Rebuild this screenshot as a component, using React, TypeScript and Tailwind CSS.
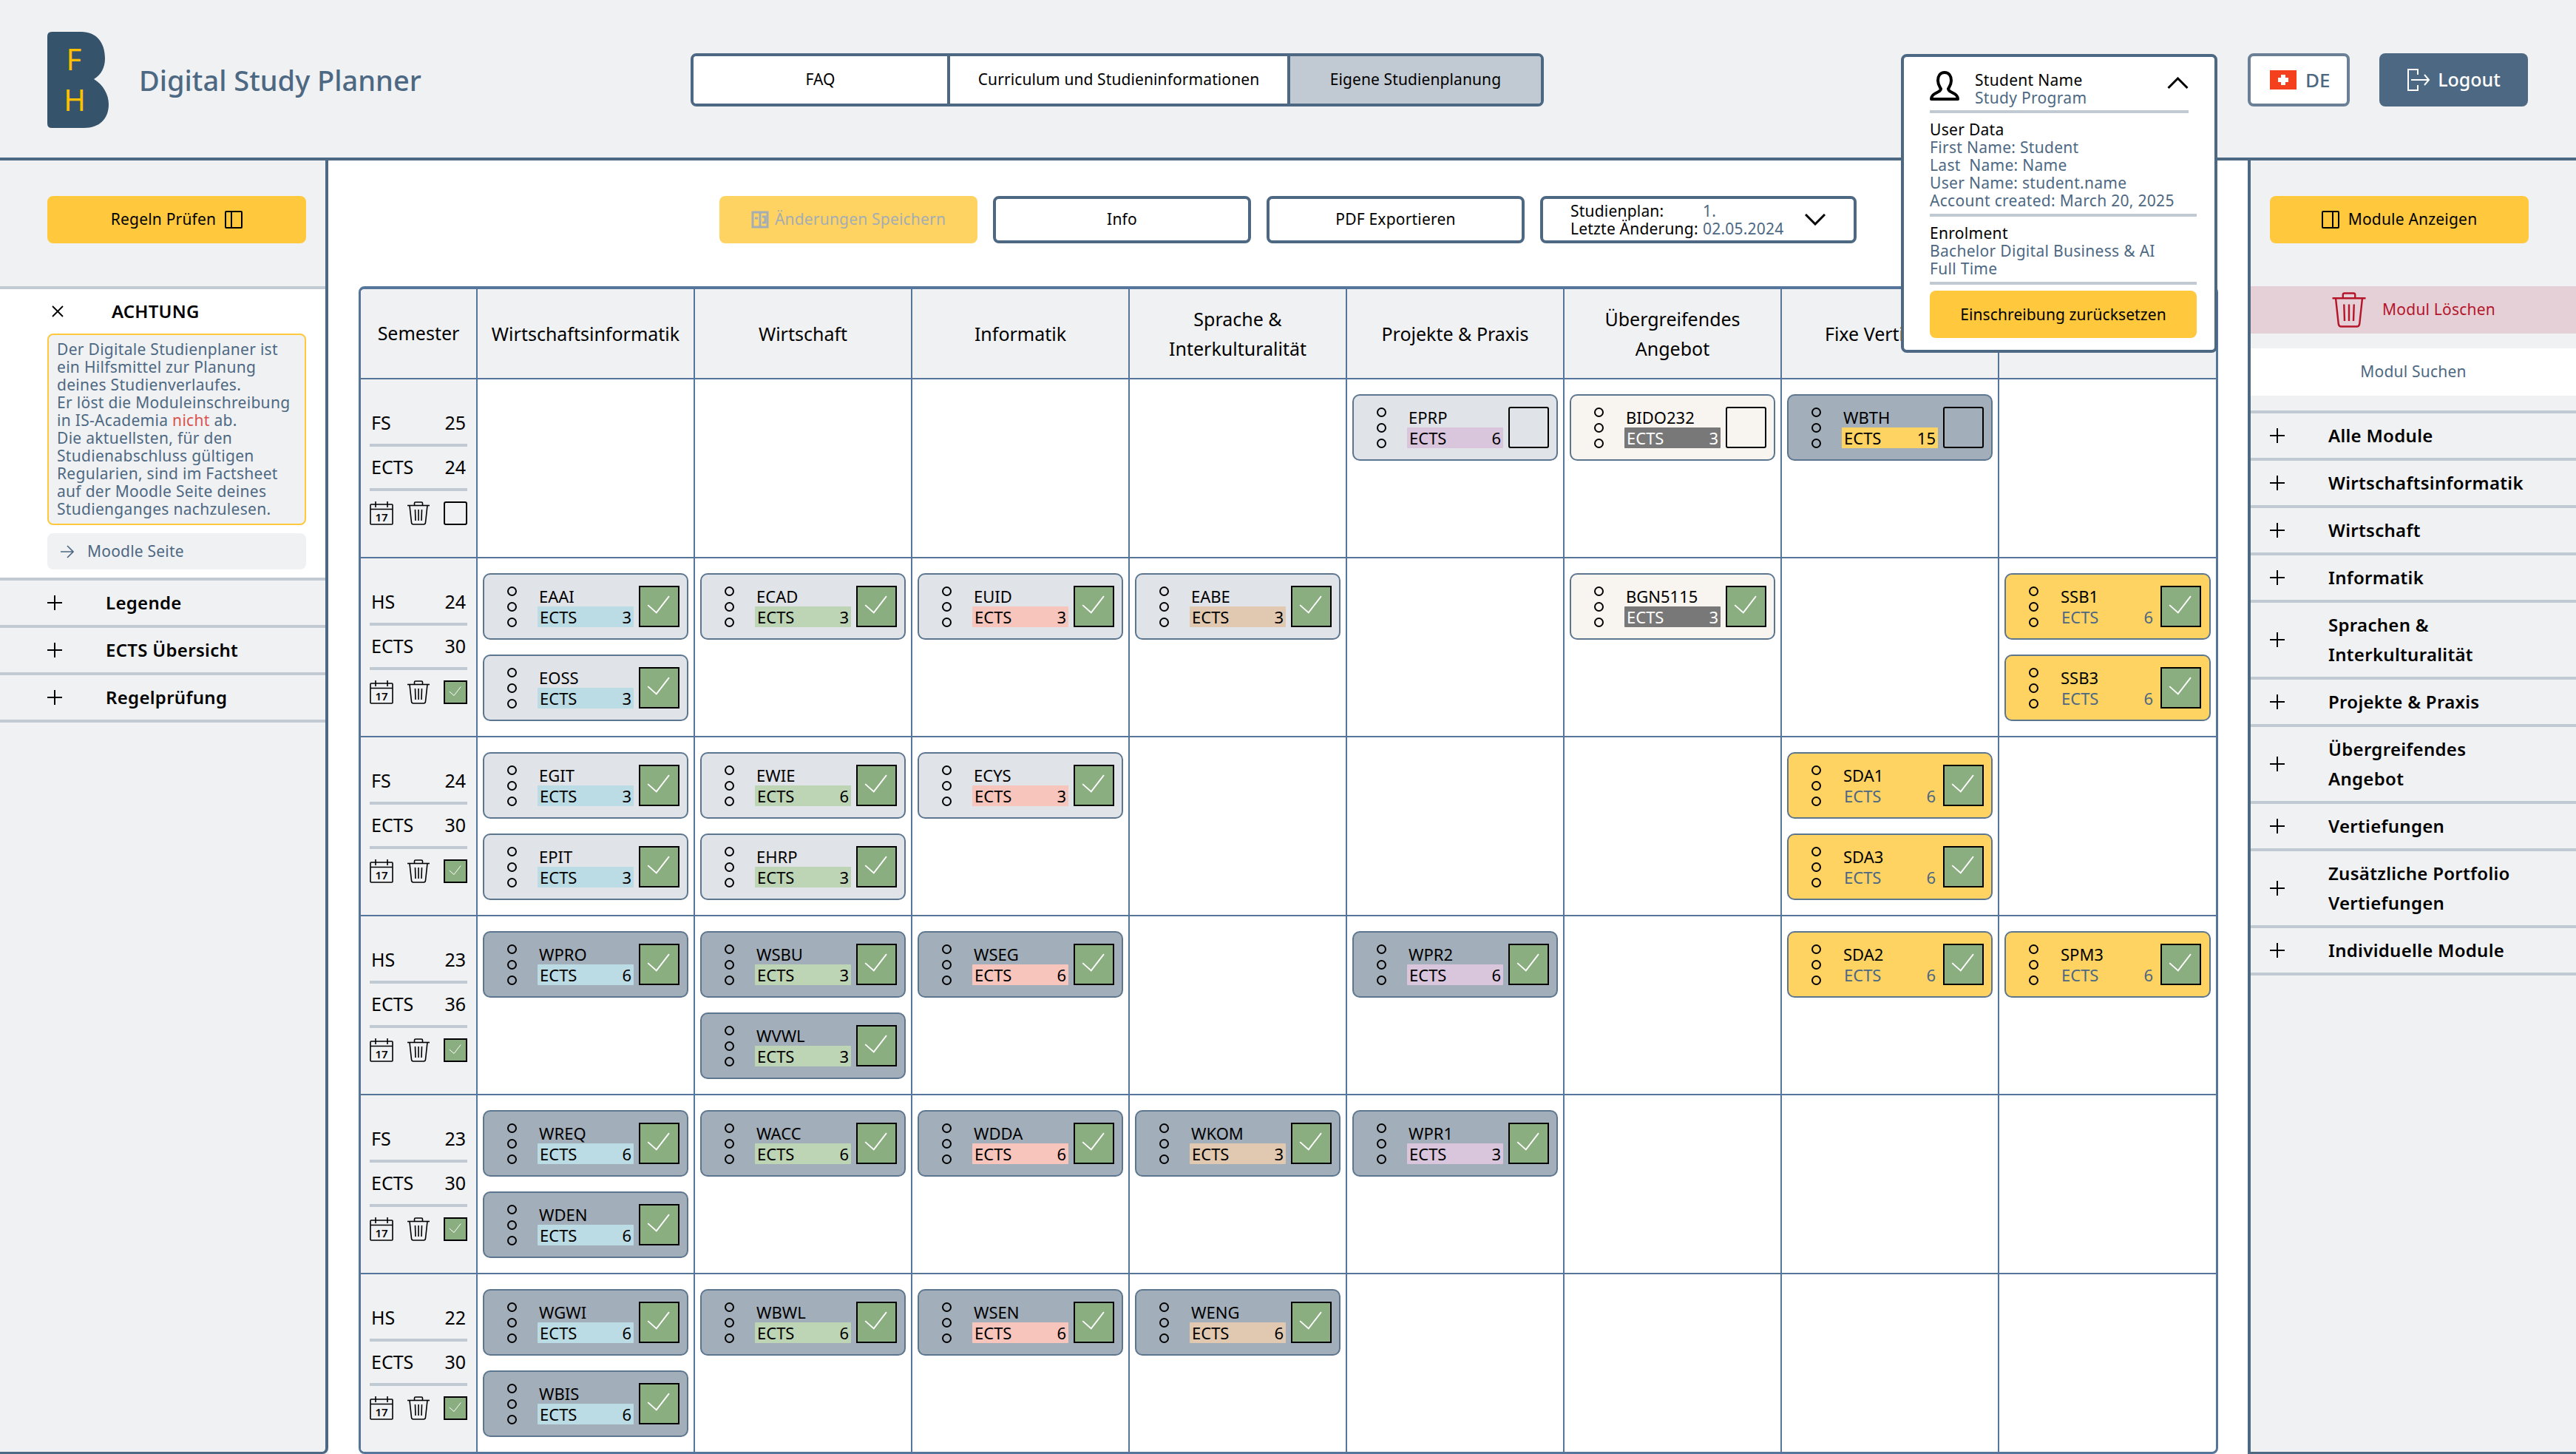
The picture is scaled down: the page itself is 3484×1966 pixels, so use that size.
import React from "react";

type Tone = "light" | "dark" | "cream" | "yellow";
type Bar = "wi" | "w" | "i" | "sp" | "pr" | "ub" | "fx" | "none";
interface Mod { n: string; e: number; tone: Tone; bar: Bar; done: boolean }

const TONE: Record<Tone, string> = {
  light: "bg-[#e0e3e8]",
  dark: "bg-[#a2aeb9]",
  cream: "bg-[#f8f4ef]",
  yellow: "bg-[#ffd362]",
};

const BAR: Record<Bar, string> = {
  wi: "bg-[#bbdce4] text-black",
  w: "bg-[#bdd4b5] text-black",
  i: "bg-[#f7c5bc] text-black",
  sp: "bg-[#e0c9b0] text-black",
  pr: "bg-[#d9c6dc] text-black",
  ub: "bg-[#787878] text-white",
  fx: "bg-[#ffd362] text-black",
  none: "text-[#4d6882]",
};

const m = (n: string, e: number, tone: Tone, bar: Bar, done = true): Mod => ({ n, e, tone, bar, done });

const HEADERS = [
  ["Wirtschaftsinformatik"],
  ["Wirtschaft"],
  ["Informatik"],
  ["Sprache &", "Interkulturalität"],
  ["Projekte & Praxis"],
  ["Übergreifendes", "Angebot"],
  ["Fixe Vertiefung"],
  [""],
];

const ROWS: { sem: string; year: number; ects: number; checked: boolean; cols: Mod[][] }[] = [
  {
    sem: "FS", year: 25, ects: 24, checked: false,
    cols: [[], [], [], [], [m("EPRP", 6, "light", "pr", false)], [m("BIDO232", 3, "cream", "ub", false)], [m("WBTH", 15, "dark", "fx", false)], []],
  },
  {
    sem: "HS", year: 24, ects: 30, checked: true,
    cols: [
      [m("EAAI", 3, "light", "wi"), m("EOSS", 3, "light", "wi")],
      [m("ECAD", 3, "light", "w")],
      [m("EUID", 3, "light", "i")],
      [m("EABE", 3, "light", "sp")],
      [],
      [m("BGN5115", 3, "cream", "ub")],
      [],
      [m("SSB1", 6, "yellow", "none"), m("SSB3", 6, "yellow", "none")],
    ],
  },
  {
    sem: "FS", year: 24, ects: 30, checked: true,
    cols: [
      [m("EGIT", 3, "light", "wi"), m("EPIT", 3, "light", "wi")],
      [m("EWIE", 6, "light", "w"), m("EHRP", 3, "light", "w")],
      [m("ECYS", 3, "light", "i")],
      [],
      [],
      [],
      [m("SDA1", 6, "yellow", "none"), m("SDA3", 6, "yellow", "none")],
      [],
    ],
  },
  {
    sem: "HS", year: 23, ects: 36, checked: true,
    cols: [
      [m("WPRO", 6, "dark", "wi")],
      [m("WSBU", 3, "dark", "w"), m("WVWL", 3, "dark", "w")],
      [m("WSEG", 6, "dark", "i")],
      [],
      [m("WPR2", 6, "dark", "pr")],
      [],
      [m("SDA2", 6, "yellow", "none")],
      [m("SPM3", 6, "yellow", "none")],
    ],
  },
  {
    sem: "FS", year: 23, ects: 30, checked: true,
    cols: [
      [m("WREQ", 6, "dark", "wi"), m("WDEN", 6, "dark", "wi")],
      [m("WACC", 6, "dark", "w")],
      [m("WDDA", 6, "dark", "i")],
      [m("WKOM", 3, "dark", "sp")],
      [m("WPR1", 3, "dark", "pr")],
      [],
      [],
      [],
    ],
  },
  {
    sem: "HS", year: 22, ects: 30, checked: true,
    cols: [
      [m("WGWI", 6, "dark", "wi"), m("WBIS", 6, "dark", "wi")],
      [m("WBWL", 6, "dark", "w")],
      [m("WSEN", 6, "dark", "i")],
      [m("WENG", 6, "dark", "sp")],
      [],
      [],
      [],
      [],
    ],
  },
];

const LEFT_ROWS = [["Legende"], ["ECTS Übersicht"], ["Regelprüfung"]];
const RIGHT_ROWS = [
  ["Alle Module"],
  ["Wirtschaftsinformatik"],
  ["Wirtschaft"],
  ["Informatik"],
  ["Sprachen &", "Interkulturalität"],
  ["Projekte & Praxis"],
  ["Übergreifendes", "Angebot"],
  ["Vertiefungen"],
  ["Zusätzliche Portfolio", "Vertiefungen"],
  ["Individuelle Module"],
];

function Logo() {
  return (
    <svg viewBox="0 0 83 130" className="w-[83px] h-[130px] shrink-0">
      <path
        d="M6 0H46C66 0 78 14 78 36C78 48 73 58 63 64C76 72 83 85 83 98C83 118 70 130 50 130H6Q0 130 0 124V6Q0 0 6 0Z"
        fill="#36536c"
      />
      <text x="36" y="52" textAnchor="middle" fontSize="40" fill="#ffc000">F</text>
      <text x="37" y="107" textAnchor="middle" fontSize="40" fill="#ffc000">H</text>
    </svg>
  );
}

function PanelIcon({ side }: { side: "left" | "right" }) {
  const x = side === "left" ? 9 : 15;
  return (
    <svg viewBox="0 0 24 24" className="w-6 h-6 shrink-0" fill="none" stroke="black" strokeWidth="2">
      <rect x="1" y="1" width="22" height="22" rx="1" />
      <path d={`M${x} 1V23`} />
    </svg>
  );
}

function TrashIcon({ color = "black", size = "w-8 h-8" }: { color?: string; size?: string }) {
  return (
    <svg viewBox="0 0 32 32" className={`${size} shrink-0`} fill="none" stroke={color} strokeWidth="1.6">
      <path d="M1 5.5H31" />
      <path d="M10.5 5.5V2.5Q10.5 1 12 1H20Q21.5 1 21.5 2.5V5.5" />
      <path d="M4 5.5L6.5 28.5Q6.8 31 9 31H23Q25.2 31 25.5 28.5L28 5.5" />
      <path d="M11.500 11L12 26M16 11V26M20.5 11L20 26" />
    </svg>
  );
}

function CalendarIcon() {
  return (
    <svg viewBox="0 0 32 32" className="w-8 h-8 shrink-0" fill="none" stroke="black" strokeWidth="1.6">
      <rect x="1" y="4" width="30" height="27" rx="1" />
      <path d="M1 10.5H31M8 0V8M24 0V8" />
      <text x="16" y="27" textAnchor="middle" fontSize="15" fontWeight="600" fill="black" stroke="none">17</text>
    </svg>
  );
}

function Check({ className }: { className: string }) {
  return (
    <svg viewBox="0 0 55 56" className={className} fill="none" stroke="white" strokeWidth="2">
      <path d="M11 26L23.5 37L42 13" />
    </svg>
  );
}

function UserIcon() {
  return (
    <svg viewBox="0 0 40 40" className="w-10 h-10 shrink-0" fill="none" stroke="black" strokeWidth="4" strokeLinejoin="round">
      <path d="M20 2C26 2 29 7 29 13C29 19 26 22 25 24C25 27 28 28 32 30C36 32 38 34 38 38H2C2 34 4 32 8 30C12 28 15 27 15 24C14 22 11 19 11 13C11 7 14 2 20 2Z" />
    </svg>
  );
}

function Chevron({ up, className }: { up: boolean; className: string }) {
  return (
    <svg viewBox="0 0 28 16" className={className} fill="none" stroke="black" strokeWidth="3">
      <path d={up ? "M1 15L14 2L27 15" : "M1 1L14 14L27 1"} />
    </svg>
  );
}

function Plus() {
  return (
    <svg viewBox="0 0 20 20" className="w-5 h-5 shrink-0" fill="none" stroke="black" strokeWidth="2">
      <path d="M10 0V20M0 10H20" />
    </svg>
  );
}

function Accordion({ lines }: { lines: string[] }) {
  return (
    <div className={`flex items-center gap-[59px] pl-[26px] border-b-4 border-[#c1cad2] font-semibold text-[24px] tracking-[0.3px] text-black leading-[40px] ${lines.length > 1 ? "h-[104px]" : "h-[64px]"}`}>
      <Plus />
      <div>
        {lines.map((l) => (
          <div key={l}>{l}</div>
        ))}
      </div>
    </div>
  );
}

function ModuleCard({ mod }: { mod: Mod }) {
  return (
    <div className={`h-[90px] rounded-[10px] border-2 border-[#5d7690] flex items-center pl-[30px] ${TONE[mod.tone]}`}>
      <div className="flex flex-col gap-2 w-[14px] items-center shrink-0">
        <div className="w-[13px] h-[13px] rounded-full border-2 border-black" />
        <div className="w-[13px] h-[13px] rounded-full border-2 border-black" />
        <div className="w-[13px] h-[13px] rounded-full border-2 border-black" />
      </div>
      <div className="ml-7 w-[130px] h-[56px] flex flex-col shrink-0 text-[22px] leading-[28px]">
        <div className="h-[28px] pl-[2px] text-black">{mod.n}</div>
        <div className={`h-[28px] flex justify-between px-[3px] rounded-[1px] ${BAR[mod.bar]}`}>
          <span>ECTS</span>
          <span>{mod.e}</span>
        </div>
      </div>
      {mod.done ? (
        <div className="ml-[7px] w-[55px] h-[56px] border-2 border-black bg-[#8bae80] shrink-0">
          <Check className="w-full h-full" />
        </div>
      ) : (
        <div className="ml-[7px] w-[55px] h-[56px] border-2 border-black rounded-[3px] shrink-0" />
      )}
    </div>
  );
}

export default function App() {
  return (
    <div className="relative w-[3484px] h-[1966px] overflow-hidden flex flex-col bg-[#f0f1f3] text-black font-['Noto_Sans',sans-serif]">
      {/* Top bar */}
      <header className="h-[217px] shrink-0 border-b-4 border-[#4d6882] flex items-start">
        <div className="ml-16 mt-[43px] flex items-center">
          <Logo />
          <span className="ml-[41px] w-[600px] text-[38px] leading-[48px] text-[#4d6882] font-medium">Digital Study Planner</span>
        </div>
        <nav className="absolute left-[934px] top-[72px] h-[72px] w-[1154px] flex border-4 border-[#4d6882] rounded-lg overflow-hidden text-[21px] tracking-[0.1px] text-black">
          <div className="w-[347px] flex items-center justify-center bg-white border-r-4 border-[#4d6882]">FAQ</div>
          <div className="w-[460px] flex items-center justify-center bg-white border-r-4 border-[#4d6882]">Curriculum und Studieninformationen</div>
          <div className="flex-1 flex items-center justify-center bg-[#c1cad2]">Eigene Studienplanung</div>
        </nav>
        <div className="absolute left-[3040px] top-[72px] flex gap-10">
          <div className="w-[138px] h-[72px] rounded-lg border-4 border-[#6b8096] bg-white flex items-center pl-[26px] gap-3 text-[26px] font-medium text-[#4d6882]">
            <svg viewBox="0 0 36 26" className="w-9 h-[26px]">
              <rect width="36" height="26" fill="#f4401c" />
              <path d="M15 6H21V10H25V16H21V20H15V16H11V10H15Z" fill="white" />
            </svg>
            DE
          </div>
          <div className="w-[201px] h-[72px] rounded-lg bg-[#4d6882] flex items-center justify-center gap-[10px] text-[25px] font-medium text-white">
            <svg viewBox="0 0 32 32" className="w-8 h-8" fill="none" stroke="white" strokeWidth="2">
              <path d="M15 9V2H2V30H15V23" />
              <path d="M6 16H30M24 9L30 16L24 23" />
            </svg>
            Logout
          </div>
        </div>
      </header>

      <div className="flex-1 flex min-h-0">
        {/* Left sidebar */}
        <aside className="w-[444px] shrink-0 border-r-4 border-b-[3px] border-[#4d6882] rounded-br-lg flex flex-col">
          <div className="pt-12 pb-[58px] pl-16">
            <button className="w-[350px] h-16 rounded-lg bg-[#ffc83d] flex items-center justify-center gap-3 text-[21px] tracking-[0.2px]">
              Regeln Prüfen
              <PanelIcon side="left" />
            </button>
          </div>
          <div className="border-t-4 border-b-4 border-[#c1cad2] bg-white h-[398px] pl-16 pr-[26px]">
            <div className="h-[60px] flex items-center">
              <svg viewBox="0 0 16 16" className="w-4 h-4 ml-[6px] shrink-0" fill="none" stroke="black" strokeWidth="1.8">
                <path d="M1 1L15 15M15 1L1 15" />
              </svg>
              <span className="ml-[65px] text-[24px] font-semibold tracking-[0.2px]">ACHTUNG</span>
            </div>
            <div className="h-[259px] rounded-lg border-2 border-[#ffc83d] bg-[#f0f1f3] pl-[11px] pt-[7px] text-[21px] tracking-[0.3px] leading-[24px] text-[#4d6882]">
              Der Digitale Studienplaner ist
              <br />
              ein Hilfsmittel zur Planung
              <br />
              deines Studienverlaufes.
              <br />
              Er löst die Moduleinschreibung
              <br />
              in IS-Academia <span className="text-[#d9534f]">nicht</span> ab.
              <br />
              Die aktuellsten, für den
              <br />
              Studienabschluss gültigen
              <br />
              Regularien, sind im Factsheet
              <br />
              auf der Moodle Seite deines
              <br />
              Studienganges nachzulesen.
            </div>
            <div className="mt-[11px] h-[49px] rounded-lg bg-[#f0f1f3] flex items-center pl-[18px] gap-[18px] text-[21px] tracking-[0.2px] text-[#4d6882]">
              <svg viewBox="0 0 18 18" className="w-[18px] h-[18px]" fill="none" stroke="#4d6882" strokeWidth="1.6">
                <path d="M0 9H17M9 1L17 9L9 17" />
              </svg>
              Moodle Seite
            </div>
          </div>
          <div className="[&>div]:pl-16">
            {LEFT_ROWS.map((lines) => (
              <Accordion key={lines[0]} lines={lines} />
            ))}
          </div>
        </aside>

        {/* Main planner */}
        <main className="flex-1 min-w-0 bg-white px-[41px] flex flex-col">
          <div className="pt-12 pb-[58px] flex justify-center gap-[21px] text-[21px] tracking-[0.2px]">
            <button className="w-[349px] h-16 rounded-lg bg-[#ffd362] flex items-center justify-center gap-2 text-[#a3adb5]">
              <svg viewBox="0 0 24 24" className="w-6 h-6" fill="none" stroke="#a3adb5" strokeWidth="3">
                <rect x="2" y="2" width="20" height="20" />
                <path d="M12 2V22M5 10H9M15 8H19V16H15" />
              </svg>
              Änderungen Speichern
            </button>
            <button className="w-[349px] h-16 rounded-lg border-4 border-[#4d6882] bg-white">Info</button>
            <button className="w-[349px] h-16 rounded-lg border-4 border-[#4d6882] bg-white">PDF Exportieren</button>
            <div className="w-[428px] h-16 rounded-lg border-4 border-[#4d6882] bg-white flex items-center pl-[37px] leading-[24px]">
              <div className="w-[179px]">
                Studienplan:
                <br />
                Letzte Änderung:
              </div>
              <div className="text-[#4d6882]">
                1.
                <br />
                02.05.2024
              </div>
              <Chevron up={false} className="ml-auto mr-[38px] w-[28px] h-[16px]" />
            </div>
          </div>

          <div className="w-[2515px] border-x-[3px] border-t-4 border-b-[3px] border-[#55759b] rounded-t-lg rounded-b-lg overflow-hidden grid grid-cols-[158px_repeat(7,294px)_1fr] grid-rows-[122px_repeat(5,242px)_240px] text-[25px]">
            <div className="bg-[#f0f1f3] border-r-2 border-b-2 border-[#55759b] flex items-center justify-center">Semester</div>
            {HEADERS.map((lines, i) => (
              <div key={i} className={`bg-[#f0f1f3] border-b-2 border-[#55759b] flex flex-col items-center justify-center leading-[40px] ${i < 7 ? "border-r-2" : ""}`}>
                {lines.map((l) => (
                  <div key={l}>{l}</div>
                ))}
              </div>
            ))}
            {ROWS.map((row, r) => (
              <React.Fragment key={r}>
                <div className={`bg-[#f0f1f3] border-r-2 border-[#55759b] pl-3 pr-3 pt-[31px] ${r < 5 ? "border-b-2" : ""}`}>
                  <div className="h-[56px] flex items-center justify-between px-[2px]">
                    <span>{row.sem}</span>
                    <span>{row.year}</span>
                  </div>
                  <div className="h-1 bg-[#c1cad2]" />
                  <div className="h-[56px] flex items-center justify-between px-[2px]">
                    <span>ECTS</span>
                    <span>{row.ects}</span>
                  </div>
                  <div className="h-1 bg-[#c1cad2]" />
                  <div className="mt-[14px] flex justify-between">
                    <CalendarIcon />
                    <TrashIcon />
                    {row.checked ? (
                      <div className="w-8 h-8 border-2 border-black bg-[#8bae80]">
                        <Check className="w-full h-full" />
                      </div>
                    ) : (
                      <div className="w-8 h-8 border-2 border-black rounded-[3px]" />
                    )}
                  </div>
                </div>
                {row.cols.map((mods, c) => (
                  <div key={c} className={`border-[#55759b] px-[7px] pt-5 flex flex-col gap-5 ${r < 5 ? "border-b-2" : ""} ${c < 7 ? "border-r-2" : ""}`}>
                    {mods.map((mod) => (
                      <ModuleCard key={mod.n} mod={mod} />
                    ))}
                  </div>
                ))}
              </React.Fragment>
            ))}
          </div>
        </main>

        {/* Right sidebar */}
        <aside className="w-[444px] shrink-0 border-l-4 border-b-[3px] border-[#4d6882] flex flex-col">
          <div className="pt-12 pb-[58px] pl-[26px]">
            <button className="w-[350px] h-16 rounded-lg bg-[#ffc83d] flex items-center justify-center gap-3 text-[21px] tracking-[0.2px]">
              <PanelIcon side="right" />
              Module Anzeigen
            </button>
          </div>
          <div className="h-16 bg-[#e4d0d6] flex items-center justify-center gap-[21px] text-[21px] tracking-[0.2px] text-[#b5152b]">
            <TrashIcon color="#b5152b" size="w-12 h-12" />
            Modul Löschen
          </div>
          <div className="mt-5 h-16 bg-white flex items-center justify-center text-[21px] tracking-[0.2px] text-[#4d6882]">Modul Suchen</div>
          <div className="mt-5 border-t-4 border-[#c1cad2]">
            {RIGHT_ROWS.map((lines) => (
              <Accordion key={lines[0]} lines={lines} />
            ))}
          </div>
        </aside>
      </div>

      {/* User popup */}
      <div className="absolute left-[2571px] top-[73px] w-[428px] h-[404px] rounded-lg border-4 border-[#4d6882] bg-white pl-[35px] pr-6 pt-[19px] text-[21px] tracking-[0.3px] leading-[24px]">
        <div className="flex items-start h-[48px]">
          <UserIcon />
          <div className="ml-[21px] w-[260px]">
            <div>Student Name</div>
            <div className="text-[#4d6882]">Study Program</div>
          </div>
          <Chevron up className="mt-2 w-[29px] h-[16px]" />
        </div>
        <div className="mt-[5px] w-[350px] h-1 bg-[#c1cad2]" />
        <div className="mt-[10px]">User Data</div>
        <div className="text-[#4d6882] whitespace-pre">
          <div>First Name: Student</div>
          <div>Last  Name: Name</div>
          <div>User Name: student.name</div>
          <div>Account created: March 20, 2025</div>
        </div>
        <div className="mt-[6px] h-1 bg-[#c1cad2]" />
        <div className="mt-[10px]">Enrolment</div>
        <div className="text-[#4d6882]">Bachelor Digital Business &amp; AI</div>
        <div className="text-[#4d6882]">Full Time</div>
        <div className="mt-[6px] h-1 bg-[#c1cad2]" />
        <button className="mt-2 w-full h-16 rounded-lg bg-[#ffc83d] text-[21px] tracking-[0.1px] text-black">Einschreibung zurücksetzen</button>
      </div>
    </div>
  );
}
